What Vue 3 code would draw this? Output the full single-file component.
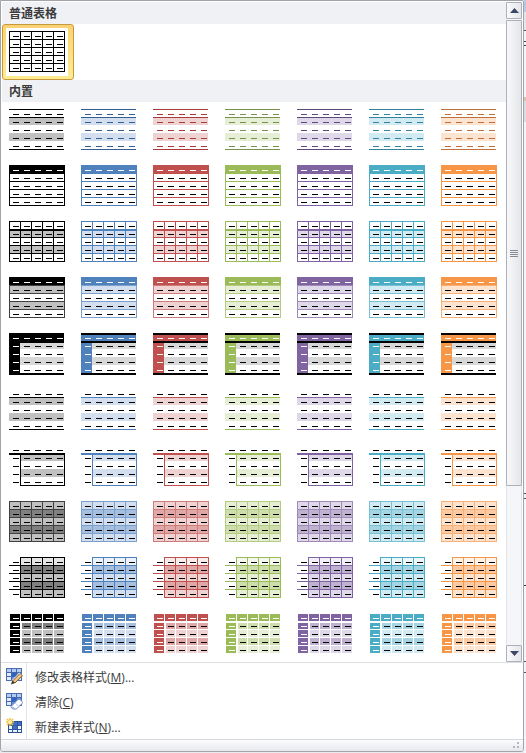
<script setup>
import { ref } from 'vue'

const accents = [
  { name: '黑色', main: '#000000', edge: '#404040', light: '#c0c0c0', mid: '#808080', pale: '#e6e6e6', ink: '#000000' },
  { name: '蓝色', main: '#4f81bd', edge: '#7ba0cd', light: '#d3dfee', mid: '#a7bfde', pale: '#edf2f8', ink: '#365f91' },
  { name: '红色', main: '#c0504d', edge: '#cf7b79', light: '#efd3d2', mid: '#dfa7a6', pale: '#f8eded', ink: '#a83c3a' },
  { name: '绿色', main: '#9bbb59', edge: '#b3cc82', light: '#e6eed5', mid: '#cdddac', pale: '#f5f8ee', ink: '#76924c' },
  { name: '紫色', main: '#8064a2', edge: '#9f8ab9', light: '#dfd8e8', mid: '#bfb1d0', pale: '#f2eff6', ink: '#5f497a' },
  { name: '水绿色', main: '#4bacc6', edge: '#78c0d4', light: '#d2eaf1', mid: '#a5d5e2', pale: '#edf6f9', ink: '#31849b' },
  { name: '橙色', main: '#f79646', edge: '#f9b074', light: '#fde4d0', mid: '#fbcaa2', pale: '#fef4ec', ink: '#c0703a' }
]

const box = (x, y, w, h, fill) => ({ x, y, w, h, fill })
const hline = (y, fill, x = 0, w = 55, h = 1) => box(x, y, w, h, fill)
const bands = (fill, x = 0, w = 55) => [box(x, 9, w, 7, fill), box(x, 24, w, 8, fill)]

// Five short strokes per row stand in for cell text.
const dashes = pick =>
  Array.from({ length: 25 }, (_, i) => {
    const row = Math.floor(i / 5)
    const col = i % 5
    return box(4 + col * 11, 5 + row * 8, 6, 1, pick(row, col))
  })

const rowLines = (fill, x = 0) => [0, 8, 16, 24, 32, 40].map(y => hline(y, fill, x, 56 - x))
const colLines = (fill, from = 0) => [0, 11, 22, 33, 44, 55].filter(x => x >= from).map(x => box(x, 0, 1, 41, fill))
const sides = (fill, x = 0, y = 0) => [box(x, y, 1, 41 - y, fill), box(55, y, 1, 41 - y, fill)]
const rowFills = (fills, x = 0) => fills.map((f, r) => box(x, r * 8, 55 - x, 8, f))
const black = () => '#000'

const plainGrid = [...rowLines('#000'), ...colLines('#000'), ...dashes(black)]

const styles = [
  { name: '浅色底纹', draw: c => [...bands(c.light), hline(0, c.ink), hline(8, c.ink), hline(40, c.ink), ...dashes(() => c.ink)] },
  { name: '浅色列表', draw: c => [...rowLines(c.main), ...sides(c.main), box(0, 0, 56, 9, c.main), ...dashes(r => (r ? '#000' : '#fff'))] },
  { name: '浅色网格', draw: c => [...bands(c.light), ...rowLines(c.main), ...colLines(c.main), hline(9, c.main), ...dashes(black)] },
  { name: '中等深浅底纹 1', draw: c => [...bands(c.light), ...rowLines(c.edge), ...sides(c.edge), box(0, 0, 56, 8, c.main), ...dashes(r => (r ? '#000' : '#fff'))] },
  {
    name: '中等深浅底纹 2',
    draw: c => [
      ...bands('#d8d8d8', 11, 44),
      box(0, 0, 55, 9, c.main),
      box(0, 9, 11, 32, c.main),
      hline(0, '#000', 0, 55, 2),
      hline(8, '#000', 0, 55, 2),
      hline(40, '#000', 0, 55, 2),
      ...dashes((r, k) => (r && k ? '#000' : '#fff'))
    ]
  },
  { name: '中等深浅列表 1', draw: c => [...bands(c.light), hline(8, c.main), hline(40, c.main), ...dashes(black)] },
  { name: '中等深浅列表 2', draw: c => [...bands(c.light, 12, 43), hline(8, c.main, 0, 56, 2), ...sides(c.main, 11, 8), hline(40, c.main, 11, 45), ...dashes(black)] },
  { name: '中等深浅网格 1', draw: c => [...rowFills([c.light, c.mid, c.light, c.mid, c.light]), ...rowLines(c.edge), ...colLines(c.edge), ...dashes(black)] },
  {
    name: '中等深浅网格 2',
    draw: c => [
      ...rowFills([c.pale, c.mid, c.light, c.mid, c.light], 11),
      ...rowLines(c.main, 11),
      ...colLines(c.main, 11),
      ...[8, 16, 24, 32].map(y => hline(y, c.main, 0, 11)),
      ...dashes(black)
    ]
  },
  {
    name: '中等深浅网格 3',
    draw: c => [
      ...[0, 1, 2, 3, 4].map(k => box(1 + k * 11, 1, 10, 7, c.main)),
      ...[1, 2, 3, 4].flatMap(r => {
        const y = r === 1 ? 10 : 1 + r * 8
        const h = r === 1 ? 6 : 7
        return [
          box(1, y, 10, h, c.main),
          ...[1, 2, 3, 4].map(k => box(k === 1 ? 13 : 1 + k * 11, y, k === 1 ? 9 : 10, h, r % 2 ? c.mid : c.light))
        ]
      }),
      ...dashes((r, k) => (r && k ? '#000' : '#fff'))
    ]
  }
]

const gallery = styles.flatMap(s => accents.map(c => ({ label: `${s.name} ${c.name}`, shapes: s.draw(c) })))

const selected = ref('plain')

const commands = [
  { id: 'modify', text: '修改表格样式', key: 'M', tail: '...' },
  { id: 'clear', text: '清除', key: 'C', tail: '' },
  { id: 'create', text: '新建表样式', key: 'N', tail: '...' }
]
</script>

<template>
  <div class="desk">
    <div class="popup">
      <div class="scroller">
        <div class="lists">
          <h2>普通表格</h2>
          <div class="tiles">
            <button class="tile" :class="{ selected: selected === 'plain' }" aria-label="网格型" @click="selected = 'plain'">
              <svg width="56" height="42" viewBox="0 0 56 42" shape-rendering="crispEdges">
                <rect v-for="(b, i) in plainGrid" :key="i" :x="b.x" :y="b.y" :width="b.w" :height="b.h" :fill="b.fill" />
              </svg>
            </button>
          </div>
          <h2>内置</h2>
          <div class="tiles">
            <button
              v-for="item in gallery"
              :key="item.label"
              class="tile"
              :class="{ selected: selected === item.label }"
              :aria-label="item.label"
              @click="selected = item.label"
            >
              <svg width="56" height="42" viewBox="0 0 56 42" shape-rendering="crispEdges">
                <rect v-for="(b, i) in item.shapes" :key="i" :x="b.x" :y="b.y" :width="b.w" :height="b.h" :fill="b.fill" />
              </svg>
            </button>
          </div>
        </div>
        <div class="scrollbar">
          <button class="arrow" aria-label="向上滚动">
            <svg width="9" height="5" viewBox="0 0 9 5"><path d="M4.5 0L9 5H0z" fill="#3d4765" /></svg>
          </button>
          <div class="track">
            <div class="handle"><i></i><i></i><i></i><i></i></div>
          </div>
          <button class="arrow" aria-label="向下滚动">
            <svg width="9" height="5" viewBox="0 0 9 5"><path d="M0 0h9L4.5 5z" fill="#3d4765" /></svg>
          </button>
        </div>
      </div>

      <div class="menu">
        <button v-for="cmd in commands" :key="cmd.id" class="command">
          <span class="icon">
            <svg width="17" height="17" viewBox="0 0 17 17">
              <template v-if="cmd.id !== 'create'">
                <rect x="0.5" y="0.5" width="15" height="12" fill="#dfeafb" stroke="#4a6cb0" />
                <path d="M1 1h14v3H1z" fill="#b4caee" />
                <path d="M5 4h5v4H5zM10 4h5v4h-5zM5 8h5v4H5z" fill="#5c8ce0" />
                <path d="M6 5h4v3H6z" fill="#2f62c4" />
                <path d="M1 4.5h14M1 8.5h14M5.5 1v11M10.5 1v11" stroke="#4267ad" fill="none" />
              </template>
              <template v-else>
                <rect x="2.5" y="3.5" width="13" height="11" fill="#eef4fd" stroke="#2c4f9a" />
                <path d="M3 4h12v3H3zM7 7h4v4H7z" fill="#3c6fca" />
                <path d="M3 7.5h12M3 11.5h12M6.5 4v11M11.5 4v11" stroke="#34569c" fill="none" />
                <path d="M4 0v8M0 4h8M1 1l6 6M7 1L1 7" stroke="#f2bd3c" stroke-width="1.5" />
                <circle cx="4" cy="4" r="2" fill="#fff0a0" />
              </template>
              <template v-if="cmd.id === 'modify'">
                <path d="M4.500 16.500L6 12l7.500-7.500 3.500 3L9 15z" fill="#fff" />
                <path d="M6.500 13L14 5.500l2.500 2.200L9 15z" fill="#e2b46c" stroke="#80603a" />
                <path d="M8 13.500L15 6.800" stroke="#f8dda6" />
                <path d="M5 16.500l1.200-4L9 15z" fill="#3d3630" />
              </template>
              <template v-if="cmd.id === 'clear'">
                <path d="M5 13.500l7-7q1-1 2 0l2 2q1 1 0 2L10.500 16H7q-2-1-2-2.500z" fill="#fff" stroke="#6f88bd" />
                <path d="M5.500 13l4.500 2.500H7.500q-2-0.500-2-2.500z" fill="#a9bfe6" />
                <path d="M9 10l4 3.500" stroke="#c3d1ea" />
              </template>
            </svg>
          </span>
          <span class="label">{{ cmd.text }}(<u>{{ cmd.key }}</u>){{ cmd.tail }}</span>
        </button>
      </div>

      <div class="footer">
        <svg width="8" height="8" viewBox="0 0 8 8" fill="#b3b7be">
          <path d="M5 0h2v2H5zM5 4h2v2H5zM1 4h2v2H1z" />
        </svg>
      </div>
    </div>
  </div>
</template>

<style>
body {
  background: #e9ebef;
}
</style>

<style scoped>
.desk {
  padding: 0 2px 1px 0;
  font-family: "Open Sans", "Noto Sans CJK SC", sans-serif;
  font-size: 12px;
  color: #3b3b3b;
  background:
    linear-gradient(
      #b9c8e4 12px, #e4e6ea 12px, #e4e6ea 30px, #555 30px, #555 31px, #f4f5f8 31px,
      #f4f5f8 41px, #444 41px, #444 42px, #f4f5f8 42px, #f4f5f8 45px, #444 45px, #444 46px, #f4f5f8 46px,
      #f4f5f8 97px, #d3c4ae 97px, #d3c4ae 101px, #dcdde2 101px, #dcdde2 122px, #f4f5f8 122px,
      #f4f5f8 493px, #555 493px, #555 494px, #f4f5f8 494px, #f4f5f8 498px, #555 498px, #555 499px, #f4f5f8 499px,
      #f4f5f8 585px, #333 585px, #333 586px, #f4f5f8 586px, #f4f5f8 661px, #555 661px, #555 662px, #f4f5f8 662px,
      #f4f5f8 672px, #555 672px, #555 673px, #f4f5f8 673px
    )
    right top / 2px 100% no-repeat;
}
.popup {
  background: #fff;
  border: 1px solid #a2a4a9;
  border-radius: 0 2px 3px 3px;
  overflow: hidden;
}
button {
  display: block;
  margin: 0;
  padding: 0;
  border: 0;
  background: none;
  font: inherit;
  color: inherit;
  text-align: left;
}
svg {
  display: block;
}
.scroller {
  display: flex;
  padding: 1px 1px 0 1px;
  border-bottom: 1px solid #dcdfe4;
}
.lists {
  flex: 1;
  min-width: 0;
}
h2 {
  margin: 0;
  padding-left: 7px;
  height: 22px;
  line-height: 24px;
  font-size: 12px;
  font-weight: 700;
  background: #eff1f5;
}
.tiles {
  display: grid;
  grid-template-columns: repeat(auto-fill, 72px);
}
.tile {
  height: 56px;
  padding: 7px;
}
.tile.selected {
  padding: 3px;
  border: 1px solid #c89a3c;
  border-radius: 3px;
  background: linear-gradient(#fbd273, #feec92);
}
.tile.selected svg {
  box-sizing: content-box;
  padding: 3px;
  background: #fff;
}
.scrollbar {
  display: flex;
  flex-direction: column;
  width: 16px;
  box-sizing: border-box;
  background: #f5f6f8;
}
.arrow {
  display: flex;
  align-items: center;
  justify-content: center;
  height: 17px;
  border: 1px solid #adb0b9;
  border-radius: 1px;
  background: linear-gradient(90deg, #fafafb, #e4e6eb);
}
.track {
  flex: 1;
  padding-top: 1px;
  border-left: 1px solid #e3e4e8;
  border-right: 1px solid #e3e4e8;
}
.handle {
  display: flex;
  flex-direction: column;
  align-items: center;
  justify-content: center;
  gap: 1px;
  box-sizing: border-box;
  height: 466px;
  margin: 0 -1px;
  border: 1px solid #adb0b9;
  border-radius: 1px;
  background: linear-gradient(90deg, #f8f8f9, #e5e6ea);
}
.handle i {
  width: 8px;
  height: 1px;
  background: #878b96;
}
.menu {
  padding-top: 1px;
  background: linear-gradient(90deg, #fff 25px, #e2e4e7 25px, #e2e4e7 26px, #fff 26px);
}
.command {
  display: flex;
  align-items: center;
  width: 100%;
  height: 25px;
}
.icon {
  width: 29px;
  padding-left: 5px;
}
.label {
  padding-top: 2px;
  line-height: 16px;
}
.footer {
  display: flex;
  justify-content: flex-end;
  align-items: center;
  height: 11px;
  padding-right: 3px;
  border-top: 1px solid #d5d8dd;
  background: linear-gradient(#fcfcfd, #e6e8ed);
}
</style>
